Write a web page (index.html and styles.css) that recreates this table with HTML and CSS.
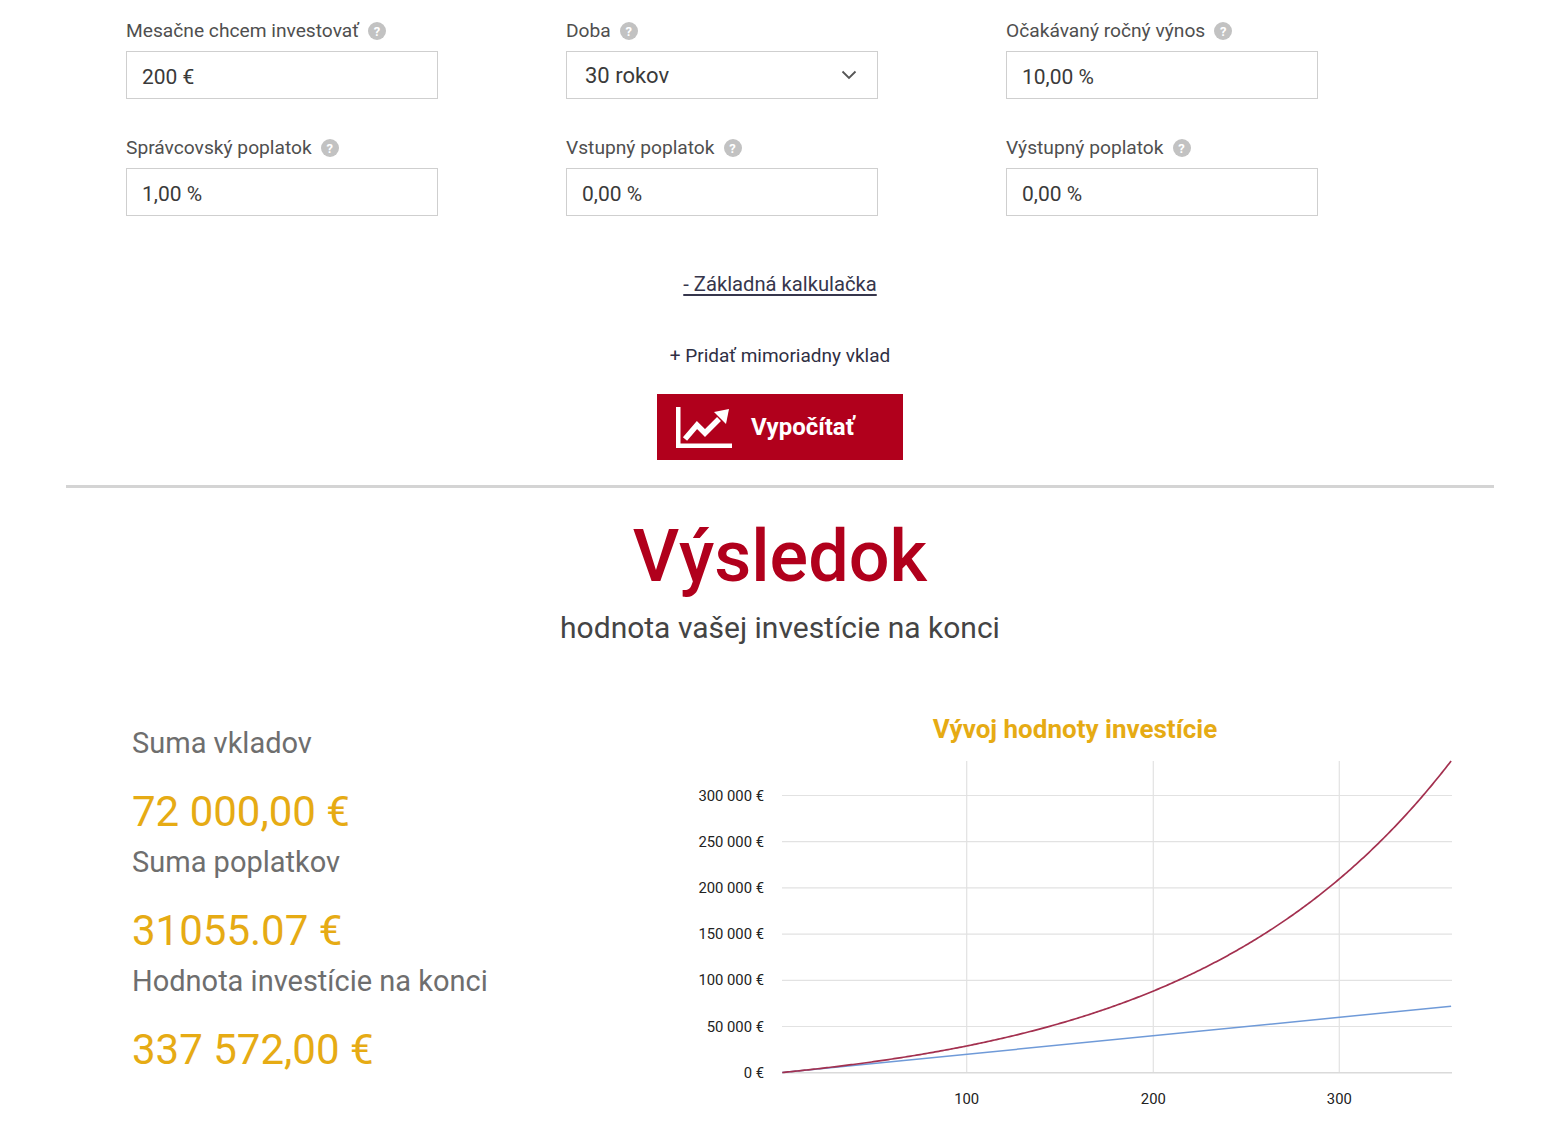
FILE: index.html
```html
<!DOCTYPE html>
<html lang="sk">
<head>
<meta charset="utf-8">
<title>Investičná kalkulačka</title>
<link rel="stylesheet" href="styles.css">
</head>
<body>
<div class="page">
  <div class="form">
    <div class="field">
      <div class="label">Mesačne chcem investovať <span class="help">?</span></div>
      <div class="input">200 €</div>
    </div>
    <div class="field">
      <div class="label">Doba <span class="help">?</span></div>
      <div class="input select">30 rokov
        <svg class="chev" width="16" height="10" viewBox="0 0 16 10"><path d="M1.5 1.5 L8 8 L14.5 1.5" fill="none" stroke="#555" stroke-width="1.8"/></svg>
      </div>
    </div>
    <div class="field">
      <div class="label">Očakávaný ročný výnos <span class="help">?</span></div>
      <div class="input">10,00 %</div>
    </div>
    <div class="field">
      <div class="label">Správcovský poplatok <span class="help">?</span></div>
      <div class="input">1,00 %</div>
    </div>
    <div class="field">
      <div class="label">Vstupný poplatok <span class="help">?</span></div>
      <div class="input">0,00 %</div>
    </div>
    <div class="field">
      <div class="label">Výstupný poplatok <span class="help">?</span></div>
      <div class="input">0,00 %</div>
    </div>
  </div>

  <div class="actions">
    <a class="toggle" href="#">- Základná kalkulačka</a>
    <div class="extra">+ Pridať mimoriadny vklad</div>
    <button class="calc" type="button">
      <svg class="calc-icon" width="56" height="42" viewBox="0 0 56 42">
        <rect x="0" y="0" width="4.5" height="41" fill="#fff"/>
        <rect x="0" y="36.5" width="56" height="4.5" fill="#fff"/>
        <polyline points="9,32 21,18 29,26 43,12" fill="none" stroke="#fff" stroke-width="5.5" stroke-linejoin="miter"/>
        <polygon points="53,2 38,5 50,17" fill="#fff"/>
      </svg>
      <span>Vypočítať</span>
    </button>
  </div>

  <div class="divider"></div>

  <h1 class="title">Výsledok</h1>
  <p class="subtitle">hodnota vašej investície na konci</p>

  <div class="results">
    <div class="summary">
      <div class="res-label">Suma vkladov</div>
      <div class="res-value">72 000,00 €</div>
      <div class="res-label">Suma poplatkov</div>
      <div class="res-value">31055.07 €</div>
      <div class="res-label">Hodnota investície na konci</div>
      <div class="res-value">337 572,00 €</div>
    </div>
    <svg class="chart" width="800" height="415" viewBox="680 700 800 415">
      <text class="chart-title" x="1075" y="738" text-anchor="middle">Vývoj hodnoty investície</text>
      <g class="grid">
        <line x1="782" y1="795.5" x2="1452" y2="795.5"/>
        <line x1="782" y1="841.7" x2="1452" y2="841.7"/>
        <line x1="782" y1="887.9" x2="1452" y2="887.9"/>
        <line x1="782" y1="934.1" x2="1452" y2="934.1"/>
        <line x1="782" y1="980.3" x2="1452" y2="980.3"/>
        <line x1="782" y1="1026.5" x2="1452" y2="1026.5"/>
        <line x1="966.7" y1="761" x2="966.7" y2="1072.7"/>
        <line x1="1153.3" y1="761" x2="1153.3" y2="1072.7"/>
        <line x1="1339.3" y1="761" x2="1339.3" y2="1072.7"/>
      </g>
      <line class="base" x1="782" y1="1072.7" x2="1452" y2="1072.7"/>
      <g class="ylab">
        <text x="764" y="800.5">300 000 €</text>
        <text x="764" y="846.7">250 000 €</text>
        <text x="764" y="892.9">200 000 €</text>
        <text x="764" y="939.1">150 000 €</text>
        <text x="764" y="985.3">100 000 €</text>
        <text x="764" y="1031.5">50 000 €</text>
        <text x="764" y="1077.7">0 €</text>
      </g>
      <g class="xlab">
        <text x="966.7" y="1103.5">100</text>
        <text x="1153.3" y="1103.5">200</text>
        <text x="1339.3" y="1103.5">300</text>
      </g>
      <path class="deposits" d="M782.3 1072.5 L1451.1 1006.2"/>
      <path id="growth" class="growth" d=""/>
    </svg>
  </div>
</div>
<script src="script.js"></script>
</body>
</html>
```

FILE: styles.css
```css
* { box-sizing: border-box; }
html, body { margin: 0; padding: 0; background: #fff; }
body {
  font-family: Roboto, "Liberation Sans", Arial, sans-serif;
  color: #333;
}
.page { width: 1546px; }

.form {
  margin-left: 126px;
  padding-top: 19px;
  display: grid;
  grid-template-columns: repeat(3, 312px);
  column-gap: 128px;
  row-gap: 37px;
}
.label {
  display: flex;
  align-items: center;
  gap: 9px;
  height: 24px;
  font-size: 19.2px;
  line-height: 24px;
  color: #4f4f4f;
  margin-bottom: 8px;
  white-space: nowrap;
}
.help {
  display: inline-flex;
  align-items: center;
  justify-content: center;
  width: 18px;
  height: 18px;
  border-radius: 50%;
  background: #c2c2c2;
  color: #fff;
  font-size: 13px;
  font-weight: 700;
  line-height: 1;
}
.input {
  height: 48px;
  border: 1px solid #cfcfcf;
  display: flex;
  align-items: center;
  padding: 4px 15px 0;
  font-size: 21px;
  color: #3a3a3a;
}
.select {
  justify-content: space-between;
  padding: 1px 20px 0 18px;
  font-size: 22px;
}
.chev { display: block; margin-top: -1px; }

.actions {
  display: flex;
  flex-direction: column;
  align-items: center;
  padding-left: 14px;
}
.toggle {
  margin-top: 56px;
  font-size: 20.2px;
  line-height: 24px;
  color: #36364c;
  text-decoration: underline;
  text-underline-offset: 3px;
}
.extra {
  margin-top: 48px;
  font-size: 19px;
  line-height: 24px;
  color: #2f2f44;
}
.calc {
  margin-top: 26px;
  width: 246px;
  height: 66px;
  border: 0;
  background: #b1001c;
  color: #fff;
  display: flex;
  align-items: center;
  gap: 19px;
  padding: 0 0 0 19px;
  font-family: Roboto, "Liberation Sans", Arial, sans-serif;
  font-size: 24px;
  font-weight: 700;
  cursor: pointer;
}
.calc-icon { display: block; margin-top: 2px; }

.divider {
  margin: 25px 0 0 66px;
  width: 1428px;
  height: 3px;
  background: #d4d4d4;
}

.title {
  margin: 33px 0 0;
  text-align: center;
  font-size: 72px;
  line-height: 72px;
  font-weight: 500;
  color: #b1001c;
  padding-left: 14px;
}
.subtitle {
  margin: 17px 0 0;
  text-align: center;
  font-size: 30px;
  line-height: 36px;
  color: #444;
  padding-left: 14px;
}

.results {
  margin-top: 54px;
  display: flex;
}
.summary {
  flex: 0 0 680px;
  padding: 25px 0 0 132px;
}
.res-label {
  font-size: 29px;
  line-height: 36px;
  color: #6e6e6e;
  margin-bottom: 27px;
}
.res-value {
  font-size: 42px;
  line-height: 48px;
  color: #e6ab14;
  margin-bottom: 8px;
}

.chart { display: block; }
.chart-title {
  font-family: Roboto, "Liberation Sans", Arial, sans-serif;
  font-size: 26px;
  font-weight: 700;
  fill: #e6ab14;
}
.grid line { stroke: #e2e2e2; stroke-width: 1.2; }
.base { stroke: #dadada; stroke-width: 1.6; }
.ylab text, .xlab text {
  font-family: Roboto, "Liberation Sans", Arial, sans-serif;
  font-size: 14.8px;
  fill: #222;
}
.ylab text { text-anchor: end; }
.xlab text { text-anchor: middle; }
.deposits { fill: none; stroke: #6f9ad8; stroke-width: 1.5; }
.growth { fill: none; stroke: #a3304f; stroke-width: 1.7; }
```

FILE: script.js
```js
(function () {
  var r = 0.0072;
  function fv(n) { return 200 * (Math.pow(1 + r, n) - 1) / r; }
  var scale = 337572 / fv(360);
  function X(n) { return 780.4 + 1.863 * n; }
  function Y(v) { return 1072.7 - v * 311.7 / 337572; }
  var d = '';
  for (var n = 1; n <= 360; n++) {
    d += (n === 1 ? 'M' : 'L') + X(n).toFixed(2) + ' ' + Y(fv(n) * scale).toFixed(2) + ' ';
  }
  document.getElementById('growth').setAttribute('d', d.trim());
})();
```
